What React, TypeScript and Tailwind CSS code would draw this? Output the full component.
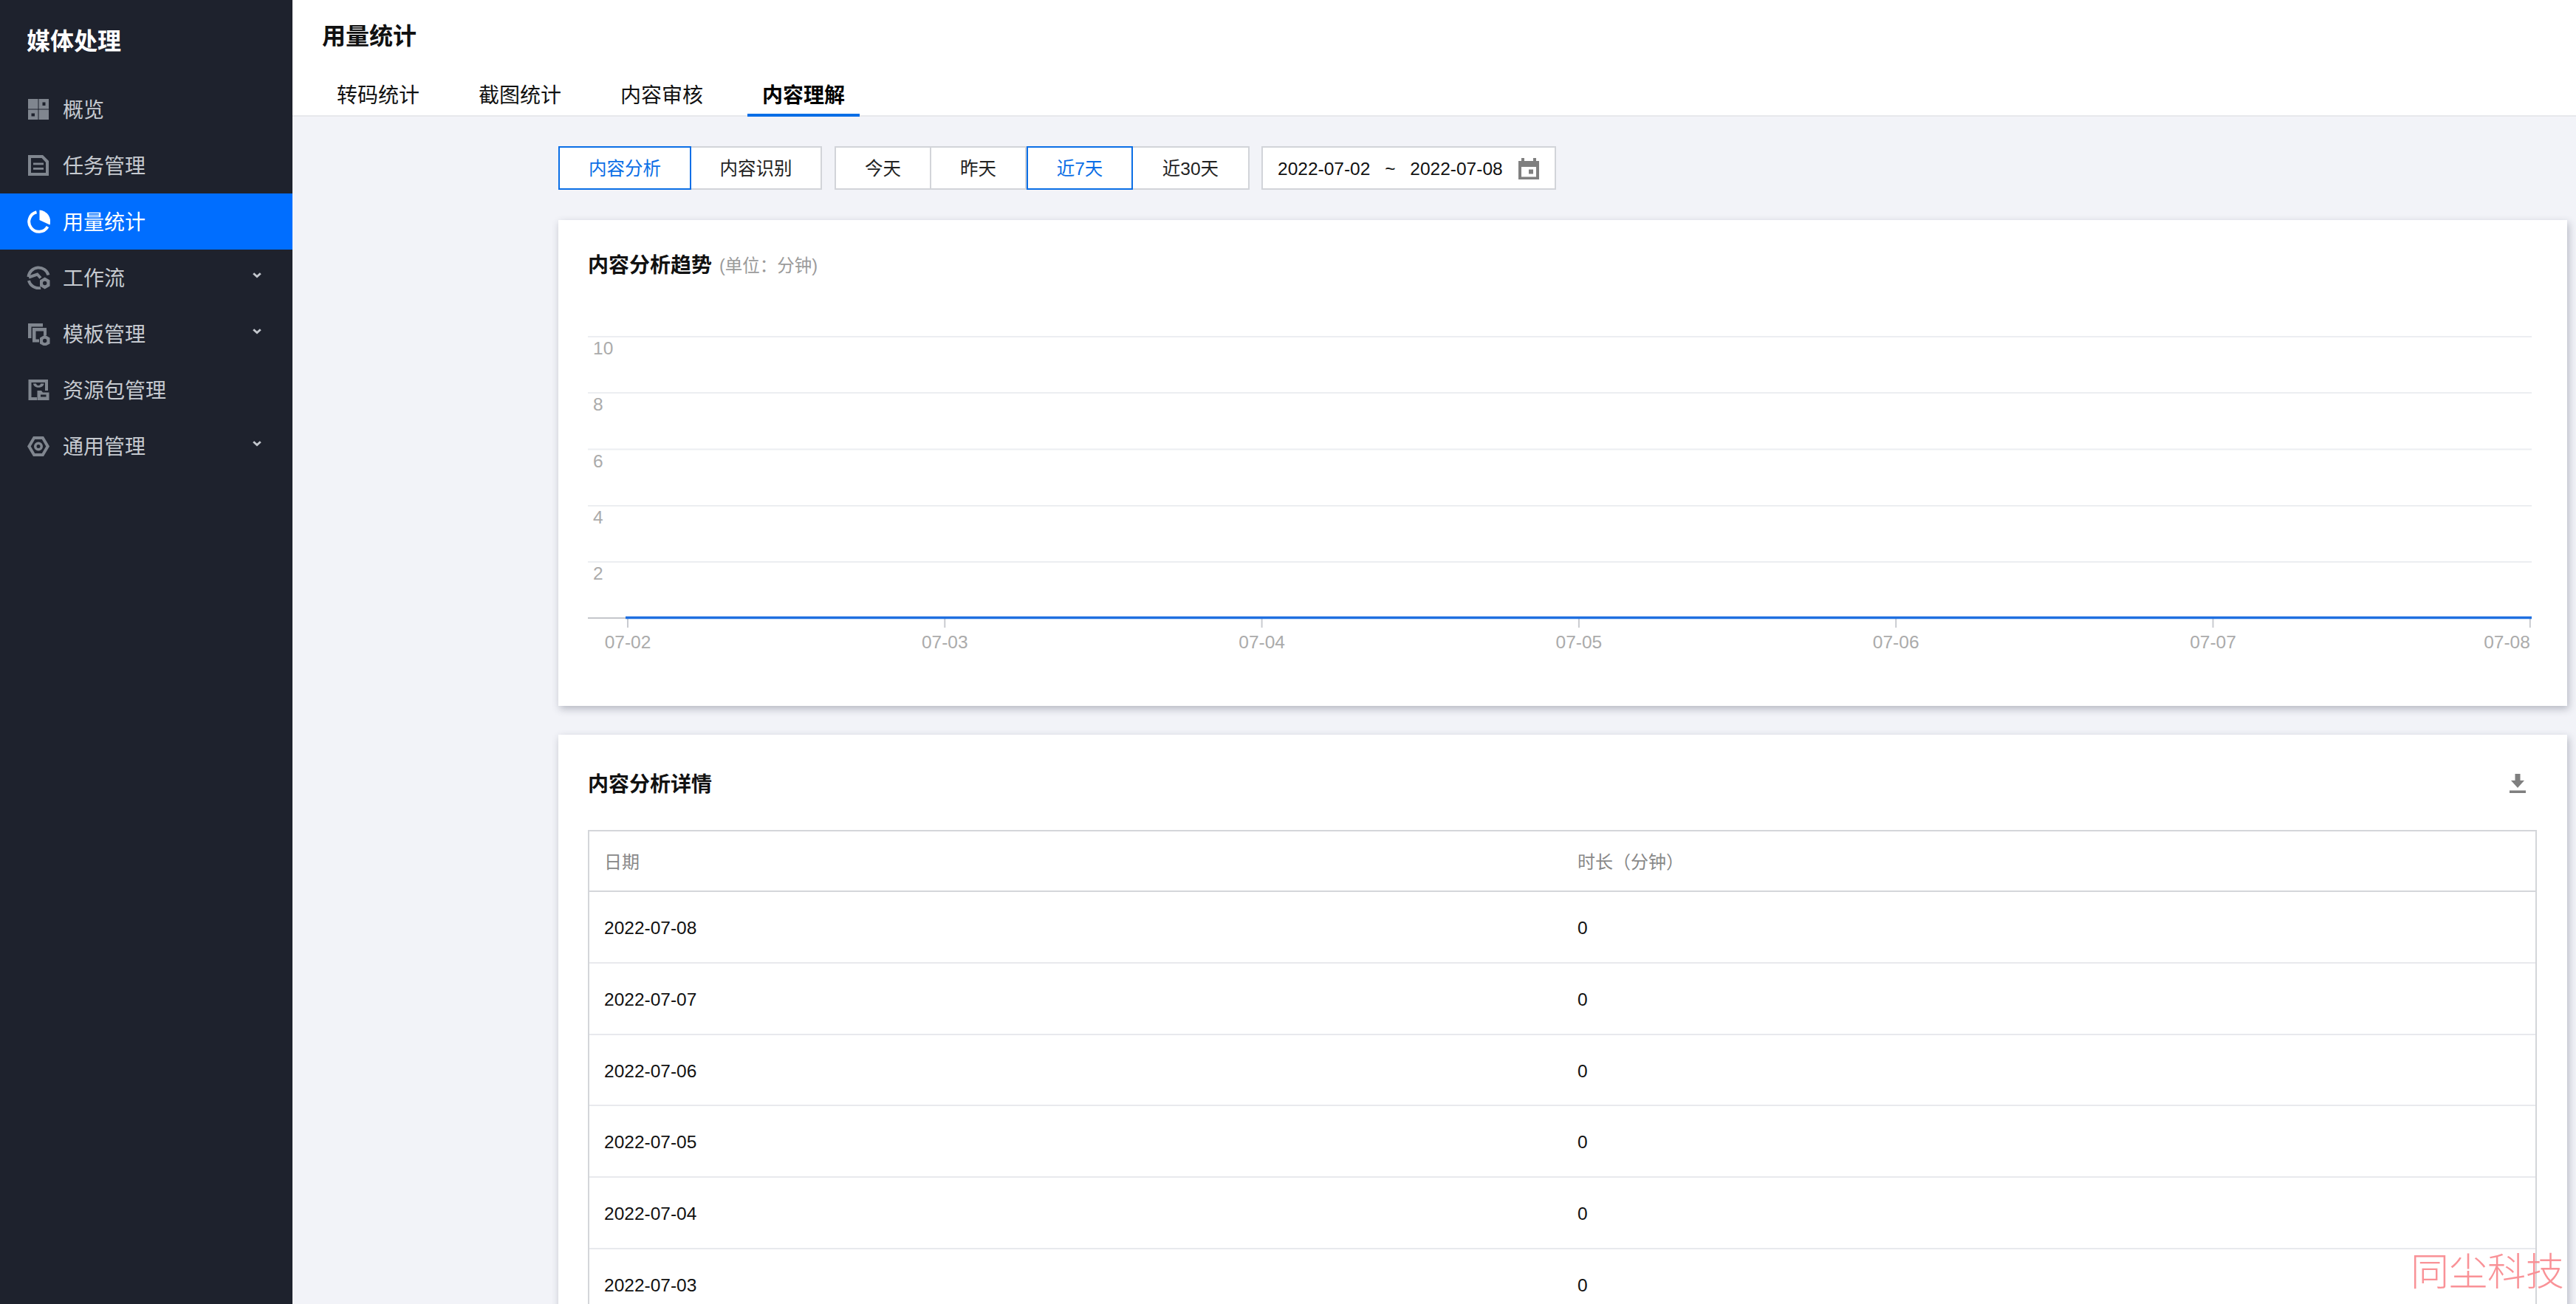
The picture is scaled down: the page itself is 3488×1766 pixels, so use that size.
import React from "react";

const font = "font-['Liberation_Sans','Noto_Sans_CJK_SC',sans-serif]";

function OverviewIcon() {
  return (
    <svg viewBox="0 0 32 32" className="w-8 h-8 shrink-0" fill="currentColor">
      <rect x="2" y="2" width="13.5" height="13.5" />
      <rect x="16.5" y="16.5" width="13.5" height="13.5" />
      <path fillRule="evenodd" d="M16.5 2H30V15.5H16.5ZM21.5 6.5V11H25.5V6.5Z" />
      <path fillRule="evenodd" d="M2 16.5H15.5V30H2ZM6.5 21.5V25.5H11V21.5Z" />
    </svg>
  );
}

function TaskIcon() {
  return (
    <svg viewBox="0 0 32 32" className="w-8 h-8 shrink-0" fill="currentColor">
      <path fillRule="evenodd" d="M2 2H22L30 10V30H2ZM6 6V26H26V12L20.5 6Z" />
      <rect x="9" y="12.5" width="14" height="2.8" />
      <rect x="9" y="19" width="14" height="2.8" />
    </svg>
  );
}

function PieIcon() {
  return (
    <svg viewBox="0 0 32 32" className="w-8 h-8 shrink-0" fill="none">
      <path d="M13.5 3.2A13.5 13.5 0 1 0 28.5 23" stroke="currentColor" strokeWidth="4" />
      <path d="M17.5 0.5A15.5 15.5 0 0 1 31.5 20.5L17.5 14Z" fill="currentColor" />
    </svg>
  );
}

function FlowIcon() {
  return (
    <svg viewBox="0 0 32 32" className="w-8 h-8 shrink-0" fill="none" stroke="currentColor">
      <path d="M2.5 15A13.8 13.8 0 0 1 29.5 12.5" strokeWidth="4" />
      <path d="M3 20A13.8 13.8 0 0 0 19 30" strokeWidth="4" />
      <path d="M3 15.5L14.5 11.5L19 16.5" strokeWidth="4" />
      <path
        fillRule="evenodd"
        d="M24.7 15.5L31.5 19.5V27.5L24.7 31.5L18 27.5V19.5ZM24.7 20.8A2.7 2.7 0 1 0 24.7 26.2A2.7 2.7 0 1 0 24.7 20.8Z"
        fill="currentColor"
        stroke="none"
      />
    </svg>
  );
}

function TemplateIcon() {
  return (
    <svg viewBox="0 0 32 32" className="w-8 h-8 shrink-0" fill="currentColor">
      <path d="M2 2H22V6.5H6.5V22H2Z" />
      <path d="M8 8H27V18H23V12.5H12.5V23.5H17V27.5H8Z" />
      <path
        fillRule="evenodd"
        d="M24.7 17.5L31.5 21.5V29.5L24.7 33L18 29.5V21.5ZM24.7 22.8A2.7 2.7 0 1 0 24.7 28.2A2.7 2.7 0 1 0 24.7 22.8Z"
      />
    </svg>
  );
}

function PackageIcon() {
  return (
    <svg viewBox="0 0 32 32" className="w-8 h-8 shrink-0" fill="currentColor">
      <path d="M2.5 2H29V17H25V6H6.5V26H14V30H2.5Z" />
      <path d="M9 7.5H13C13.5 11 18.5 11 19 7.5H23.5C23 14.5 9.5 14.5 9 7.5Z" />
      <path fillRule="evenodd" d="M14.5 17H20L22 19.5H30.5V30H14.5ZM19 22.5V25.5H26.5V22.5Z" />
    </svg>
  );
}

function SettingIcon() {
  return (
    <svg viewBox="0 0 32 32" className="w-8 h-8 shrink-0" fill="currentColor">
      <path
        fillRule="evenodd"
        d="M9 3H23L31 16.5L23 30H9L1 16.5ZM11.2 7L5.7 16.5L11.2 26H20.8L26.3 16.5L20.8 7ZM16 10.5A6 6 0 1 1 16 22.5A6 6 0 1 1 16 10.5ZM16 14A2.5 2.5 0 1 0 16 19A2.5 2.5 0 1 0 16 14Z"
      />
    </svg>
  );
}

function Chevron() {
  return (
    <svg viewBox="0 0 12 8" className="w-3 h-2 ml-auto -mt-[6px]" fill="none" stroke="#c3c7cd" strokeWidth="2.8">
      <path d="M1.2 1.2L6 5.6L10.8 1.2" />
    </svg>
  );
}

const menu = [
  { label: "概览", icon: <OverviewIcon /> },
  { label: "任务管理", icon: <TaskIcon /> },
  { label: "用量统计", icon: <PieIcon />, active: true },
  { label: "工作流", icon: <FlowIcon />, more: true },
  { label: "模板管理", icon: <TemplateIcon />, more: true },
  { label: "资源包管理", icon: <PackageIcon /> },
  { label: "通用管理", icon: <SettingIcon />, more: true },
];

const tabs = ["转码统计", "截图统计", "内容审核", "内容理解"];
const rows = ["2022-07-08", "2022-07-07", "2022-07-06", "2022-07-05", "2022-07-04", "2022-07-03"];
const grid = [
  { y: 456, label: "10" },
  { y: 532, label: "8" },
  { y: 608.5, label: "6" },
  { y: 685, label: "4" },
  { y: 761, label: "2" },
];
const days = ["07-02", "07-03", "07-04", "07-05", "07-06", "07-07", "07-08"];

function Chart() {
  // svg sits at x=756 y=298 in the page, numbers below are card relative
  return (
    <svg viewBox="0 0 2720 658" className="w-full h-full block" fontFamily="Liberation Sans, sans-serif" fontSize="24.5">
      {grid.map((g) => (
        <g key={g.label}>
          <line x1="40" x2="2672" y1={g.y - 298} y2={g.y - 298} stroke="#eceef1" strokeWidth="2" />
          <text x="47" y={g.y - 298 + 24} fill="#ababab">
            {g.label}
          </text>
        </g>
      ))}
      <line x1="40" x2="92" y1="539" y2="539" stroke="#c4c6cb" strokeWidth="2" />
      {days.map((d, i) => {
        const x = 94 + i * 429.3;
        return (
          <g key={d}>
            <line x1={x} x2={x} y1="538" y2="552" stroke="#c9cbd0" strokeWidth="2" />
            <text x={x} y="580" fill="#ababab" textAnchor={i === 6 ? "end" : "middle"}>
              {d}
            </text>
          </g>
        );
      })}
      <path d="M91 538.5H2672" stroke="#1f6fe0" strokeWidth="3.4" />
    </svg>
  );
}

export default function App() {
  return (
    <div className={`relative flex h-screen overflow-hidden bg-[#f2f3f8] ${font}`}>
      <aside className="w-[396px] shrink-0 bg-[#1e222d]">
        <div className="h-[110px] pl-9 pt-[34px] text-[32px] leading-[44px] font-bold text-white">媒体处理</div>
        <nav>
          {menu.map((m) => (
            <div
              key={m.label}
              className={
                m.active
                  ? "flex items-center gap-[17px] h-[76px] pl-9 pr-[42px] bg-[#006eff] text-white"
                  : "flex items-center gap-[17px] h-[76px] pl-9 pr-[42px] text-[#80868f]"
              }
            >
              {m.icon}
              <span className={m.active ? "pt-1 text-[28px] text-white" : "pt-1 text-[28px] text-[#c6cad0]"}>{m.label}</span>
              {m.more && <Chevron />}
            </div>
          ))}
        </nav>
      </aside>

      <main className="flex-1 min-w-0 flex flex-col">
        <header className="h-[158px] shrink-0 bg-white border-b-2 border-[#e7e8ec] pl-10">
          <h1 className="pt-[27px] text-[32px] leading-[44px] font-bold text-[#111]">用量统计</h1>
          <div className="flex gap-10 mt-[27px] -mb-[2px]">
            {tabs.map((t, i) => (
              <div
                key={t}
                className={
                  i === 3
                    ? "h-[60px] px-5 pt-2 flex items-center text-[28px] font-bold text-black border-b-4 border-[#0a6ee6]"
                    : "h-[60px] px-5 pt-2 flex items-center text-[28px] text-[#111] border-b-4 border-transparent"
                }
              >
                {t}
              </div>
            ))}
          </div>
        </header>

        <div className="flex-1 min-h-0 pl-[360px] pr-3 pt-10">
          <div className="flex h-[59px] text-[24.5px]">
            <div className="flex w-[180px] pt-1 items-center justify-center bg-white border-2 border-[#0a6ee6] text-[#0a6ee6]">
              内容分析
            </div>
            <div className="flex w-[177px] pt-1 items-center justify-center bg-white border-2 border-l-0 border-[#d2d4d9] text-[#222]">
              内容识别
            </div>
            <div className="flex w-[131px] pt-1 ml-[17px] items-center justify-center bg-white border-2 border-[#d2d4d9] text-[#222]">
              今天
            </div>
            <div className="flex w-[129px] pt-1 items-center justify-center bg-white border-2 border-l-0 border-[#d2d4d9] text-[#222]">
              昨天
            </div>
            <div className="flex w-[144px] pt-1 items-center justify-center bg-white border-2 border-[#0a6ee6] text-[#0a6ee6]">
              近7天
            </div>
            <div className="flex w-[158px] pt-1 items-center justify-center bg-white border-2 border-l-0 border-[#d2d4d9] text-[#222]">
              近30天
            </div>
            <div className="flex w-[399px] ml-4 items-center pl-5 bg-white border-2 border-[#d2d4d9] text-[#111]">
              <span className="pt-1">2022-07-02</span>
              <span className="pt-1 w-[54px] text-center">~</span>
              <span className="pt-1">2022-07-08</span>
              <svg viewBox="0 0 28 29" className="w-[28px] h-[29px] ml-[21px] mt-[1px]" fill="#7f7f7f">
                <path
                  fillRule="evenodd"
                  d="M4 0H8V4H20V0H24V4H28V29H0V4H4ZM4 12V25.5H24V12ZM14 15.5H20V21.5H14Z"
                />
              </svg>
            </div>
          </div>

          <section className="mt-[41px] h-[658px] bg-white shadow-[2px_4px_10px_rgba(54,58,80,0.32)] flex flex-col relative">
            <div className="absolute left-10 top-[43px] flex items-center gap-[10px]">
              <span className="text-[28px] leading-[34px] font-bold text-[#111]">内容分析趋势</span>
              <span className="pt-[2px] text-[23.5px] text-[#9b9b9b]">(单位：分钟)</span>
            </div>
            <Chart />
          </section>

          <section className="mt-[39px] bg-white shadow-[2px_4px_10px_rgba(54,58,80,0.32)] px-10 pt-[46px]">
            <div className="flex items-center justify-between h-[40px]">
              <span className="pt-1 text-[28px] font-bold text-[#111]">内容分析详情</span>
              <svg viewBox="0 0 22 26" className="w-[22px] h-[26px] mr-[16px]" fill="#7f7f7f">
                <path d="M7.5 0H14.5V9H20L11 19L2 9H7.5Z" />
                <rect x="0" y="22.5" width="22" height="3.5" />
              </svg>
            </div>
            <div className="mt-[43px] mr-[1px] border-2 border-b-0 border-[#d4d6da] w-[2639px]">
              <div className="flex items-center h-[82px] pt-1 border-b-2 border-[#d4d6da] text-[24px] text-[#888]">
                <div className="w-[1318px] pl-5">日期</div>
                <div className="pl-[20px]">时长（分钟）</div>
              </div>
              {rows.map((r) => (
                <div key={r} className="flex items-center h-[96.8px] pt-1 border-b-2 border-[#e8e9ed] text-[24.5px] text-[#111]">
                  <div className="w-[1318px] pl-5">{r}</div>
                  <div className="pl-[20px]">0</div>
                </div>
              ))}
            </div>
          </section>
        </div>
      </main>

      <div className="absolute right-[16px] bottom-[12px] text-[52px] leading-[60px] font-light text-[#f8868c]/90 font-['Liberation_Serif','Noto_Sans_CJK_SC',serif] pointer-events-none">
        同尘科技
      </div>
    </div>
  );
}
